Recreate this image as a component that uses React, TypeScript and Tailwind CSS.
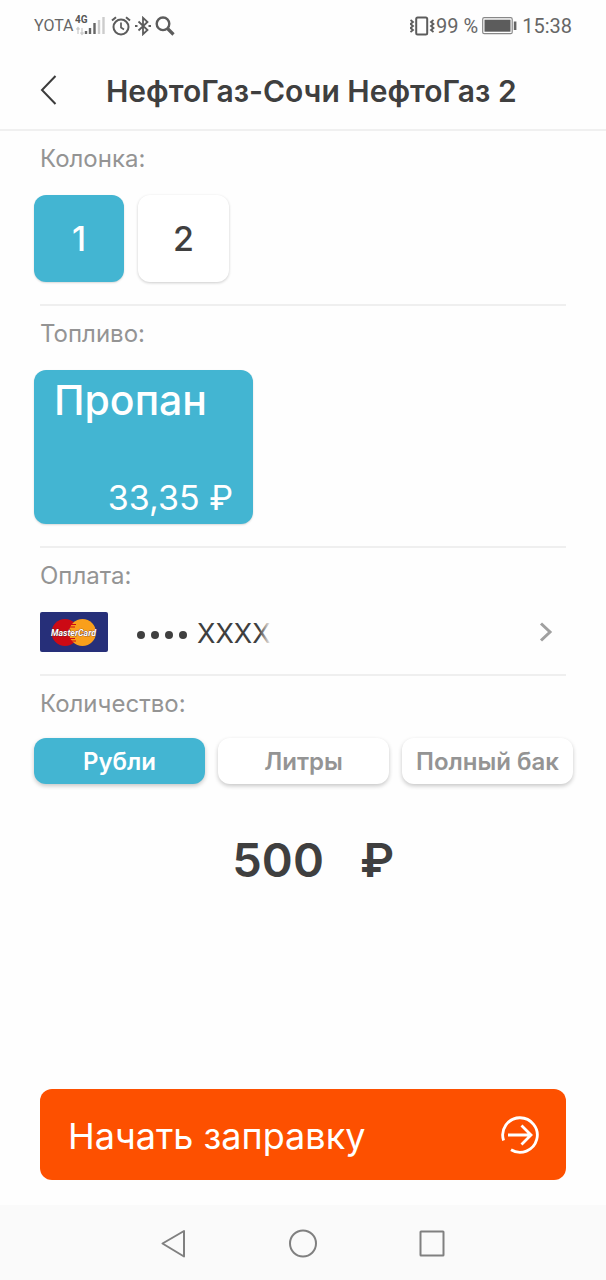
import { useState } from "react";
import type { ReactNode } from "react";

const units = ["Рубли", "Литры", "Полный бак"];

function StatusBar() {
  return (
    <div className="flex h-[52px] items-center justify-between pr-[34px] pl-[34px] font-['Roboto',sans-serif] text-[#666]">
      <div className="flex items-center">
        <span className="text-base leading-5">YOTA</span>
        <svg className="ml-px h-6 w-[30px]" viewBox="0 0 30 24" aria-label="4G">
          <text x="0" y="9" fontSize="10" fontWeight="700" fill="#555" fontFamily="Roboto, sans-serif">
            4G
          </text>
          <path d="M3 20v-6M1.500 15.500l1.500-2 1.500 2M7 14v6M5.500 18.500l1.500 2 1.500-2" stroke="#ccc" strokeWidth="1.300" fill="none" />
          <path d="M11 20v-3M15 20v-6M19.500 20V9" stroke="#666" strokeWidth="2.400" />
          <path d="M24 20V6M28.500 20V3" stroke="#ccc" strokeWidth="2.400" />
        </svg>
        <svg className="ml-1.5 h-5 w-5" viewBox="0 0 20 20" fill="none" stroke="#5c5c5c" strokeWidth="2" aria-hidden="true">
          <circle cx="10" cy="11" r="7.500" />
          <path d="M10 6.500v5l3 2" strokeWidth="1.700" />
          <path d="M1 4.500 5 1.200M19 4.500l-4-3.300" />
        </svg>
        <svg className="ml-1 h-5 w-4" viewBox="0 0 16 20" fill="none" stroke="#5c5c5c" strokeWidth="1.800" aria-hidden="true">
          <path d="M3.500 5.500l9 8.500L8 18.200V1.800L12.500 6l-9 8.500" />
          <path d="M0 10h2.500M13.500 10H16" strokeWidth="2.200" />
        </svg>
        <svg className="ml-1 h-5 w-5" viewBox="0 0 20 20" fill="none" stroke="#5c5c5c" aria-hidden="true">
          <circle cx="8" cy="7.800" r="6.300" strokeWidth="2.400" />
          <path d="M12.500 12.500l6 6" strokeWidth="3.200" />
        </svg>
      </div>
      <div className="flex items-center text-xl leading-6">
        <svg className="h-5 w-[26px]" viewBox="0 0 26 20" fill="none" stroke="#5c5c5c" aria-hidden="true">
          <rect x="6.200" y="1.500" width="11" height="17" rx="1.500" strokeWidth="2" />
          <path d="M0.500 4l2.500 2-2.500 2 2.500 2-2.500 2 2.500 2-2.500 2M23.500 4L21 6l2.500 2-2.500 2 2.500 2-2.500 2 2.500 2" strokeWidth="1.800" />
        </svg>
        <span>99 %</span>
        <svg className="ml-1 h-[18px] w-[36px]" viewBox="0 0 36 18" fill="none" aria-hidden="true">
          <rect x="0.700" y="0.700" width="29.500" height="16" rx="1.500" stroke="#888" strokeWidth="1.200" />
          <rect x="2.500" y="2.700" width="26" height="12" fill="#5c5c5c" />
          <rect x="31.800" y="4.500" width="2.600" height="8.500" fill="#666" />
        </svg>
        <span className="ml-1">15:38</span>
      </div>
    </div>
  );
}

function Section({ title, last, children }: { title: string; last?: boolean; children: ReactNode }) {
  return (
    <section className={last ? "mx-10 pt-3" : "mx-10 border-b-2 border-[#efefef] pt-3 pb-[22px]"}>
      <h2 className="text-2xl leading-8 text-[#949494]">{title}</h2>
      {children}
    </section>
  );
}

function MasterCard() {
  return (
    <svg className="h-10 w-[68px]" viewBox="0 0 68 40" role="img" aria-label="MasterCard">
      <rect width="68" height="40" rx="2" fill="#262f79" />
      <circle cx="25" cy="20.500" r="13.500" fill="#cc0a14" />
      <circle cx="42.500" cy="20.500" r="13.500" fill="#f99f1b" />
      <path d="M30 12.500h6M29 15h6M29 26.500h6M30 29h6" stroke="#cc0a14" strokeWidth="1.200" />
      <text
        x="33.500"
        y="24"
        textAnchor="middle"
        fontSize="8.800"
        fontWeight="700"
        fontStyle="italic"
        fontFamily="Roboto, sans-serif"
        fill="#fff"
        stroke="#4a2230"
        strokeWidth="0.600"
        paintOrder="stroke"
      >
        MasterCard
      </text>
    </svg>
  );
}

export default function App() {
  const [pump, setPump] = useState(1);
  const [unit, setUnit] = useState("Рубли");
  const [amount, setAmount] = useState("500");

  return (
    <div className="flex min-h-screen flex-col bg-[#fefefe] font-['Inter',sans-serif] text-[#3f3f3f]">
      <StatusBar />
      <header className="flex h-[79px] items-center border-b-2 border-[#f0f0f0] pl-9">
        <button type="button" aria-label="Назад" className="flex h-10 w-6 items-center justify-center">
          <svg className="h-8 w-5" viewBox="0 0 20 32" fill="none" stroke="#3c3c3c" strokeWidth="2" aria-hidden="true">
            <path d="M17.500 1L4 15l13.500 14" />
          </svg>
        </button>
        <h1 className="ml-[46px] text-[30px] leading-9 font-semibold whitespace-nowrap">НефтоГаз-Сочи НефтоГаз 2</h1>
      </header>

      <main className="flex flex-1 flex-col">
        <Section title="Колонка:">
          <div className="mt-5 -ml-1.5 flex gap-3.5">
            {[1, 2].map((n) => (
              <button
                key={n}
                type="button"
                aria-pressed={pump === n}
                onClick={() => setPump(n)}
                className={
                  pump === n
                    ? "h-[87px] w-[90px] rounded-xl bg-[#43b5d2] text-[34px] font-medium text-white shadow-[0_1px_2px_rgba(0,0,0,0.15)]"
                    : "h-[87px] w-[91px] rounded-xl bg-white text-[34px] font-medium shadow-[0_1px_3px_rgba(0,0,0,0.2)]"
                }
              >
                {n}
              </button>
            ))}
          </div>
        </Section>

        <Section title="Топливо:">
          <button
            type="button"
            aria-pressed="true"
            className="mt-5 -ml-1.5 flex h-[154px] w-[219px] flex-col justify-between rounded-xl bg-[#43b5d2] px-5 pt-1.5 pb-1 text-white shadow-[0_1px_2px_rgba(0,0,0,0.15)]"
          >
            <span className="self-start text-[41px] leading-[48px] font-medium">Пропан</span>
            <span className="self-end text-[34px] leading-[44px]">33,35 ₽</span>
          </button>
        </Section>

        <Section title="Оплата:">
          <button type="button" className="mt-5 flex h-10 w-full items-center">
            <MasterCard />
            <span className="ml-[29px] flex items-center text-[27px] leading-8">
              <span className="flex gap-[6px] pt-1.5" role="img" aria-label="Номер карты скрыт">
                <span className="size-2 rounded-full bg-[#3f3f3f]" />
                <span className="size-2 rounded-full bg-[#3f3f3f]" />
                <span className="size-2 rounded-full bg-[#3f3f3f]" />
                <span className="size-2 rounded-full bg-[#3f3f3f]" />
              </span>
              <span className="relative ml-2.5 pt-1">
                XXXX
                <span className="absolute inset-y-0 right-0 w-3 bg-linear-to-r from-transparent to-[#fefefe]" />
              </span>
            </span>
            <svg className="mr-3 ml-auto h-5 w-4" viewBox="0 0 16 20" fill="none" stroke="#a0a0a0" strokeWidth="3" aria-hidden="true">
              <path d="M3 1.500L12 10l-9 8.500" />
            </svg>
          </button>
        </Section>

        <Section title="Количество:" last>
          <div className="mt-[18px] -mr-[7px] -ml-1.5 grid grid-cols-3 gap-[13px]">
            {units.map((u) => (
              <button
                key={u}
                type="button"
                aria-pressed={unit === u}
                onClick={() => setUnit(u)}
                className={
                  unit === u
                    ? "h-[46px] rounded-xl bg-[#43b5d2] pt-0.5 text-2xl font-semibold whitespace-nowrap text-white shadow-[0_2px_4px_rgba(0,0,0,0.22)]"
                    : "h-[46px] rounded-xl bg-white pt-0.5 text-2xl font-semibold whitespace-nowrap text-[#949494] shadow-[0_2px_4px_rgba(0,0,0,0.22)]"
                }
              >
                {u}
              </button>
            ))}
          </div>
          <label className="mt-12 flex items-center justify-center gap-9 pl-4 text-[47px] leading-14 font-semibold">
            <input
              aria-label="Сумма"
              inputMode="numeric"
              value={amount}
              onChange={(e) => setAmount(e.target.value)}
              className="h-14 w-24 bg-transparent text-right outline-none"
            />
            <span>₽</span>
          </label>
        </Section>

        <button
          type="button"
          className="mx-10 mt-auto mb-[25px] flex h-[91px] items-center justify-between rounded-xl bg-[#fd5000] pr-[26px] pl-7 text-4xl text-white"
        >
          <span className="pt-0.5">Начать заправку</span>
          <svg className="h-10 w-10" viewBox="0 0 40 40" fill="none" stroke="#fff" strokeWidth="2.800" aria-hidden="true">
            <path d="M3.600 25.500A17.300 17.300 0 1 1 11 34.800" />
            <path d="M8 20h21M21.500 10.500L31 20l-9.500 9.500" />
          </svg>
        </button>
      </main>

      <nav className="flex h-[75px] items-center justify-center gap-[97px] bg-[#fafafa] text-[#808080]">
        <button type="button" aria-label="Назад">
          <svg className="h-8 w-8" viewBox="0 0 32 32" fill="none" stroke="currentColor" strokeWidth="2" strokeLinejoin="round" aria-hidden="true">
            <path d="M26 4v25.500L4.500 16.500z" />
          </svg>
        </button>
        <button type="button" aria-label="Домой">
          <svg className="h-8 w-8" viewBox="0 0 32 32" fill="none" stroke="currentColor" strokeWidth="2" aria-hidden="true">
            <circle cx="16" cy="16.500" r="13" />
          </svg>
        </button>
        <button type="button" aria-label="Недавние">
          <svg className="h-8 w-8" viewBox="0 0 32 32" fill="none" stroke="currentColor" strokeWidth="2" strokeLinejoin="round" aria-hidden="true">
            <rect x="4.500" y="4.500" width="23" height="24" rx="0.500" />
          </svg>
        </button>
      </nav>
    </div>
  );
}
